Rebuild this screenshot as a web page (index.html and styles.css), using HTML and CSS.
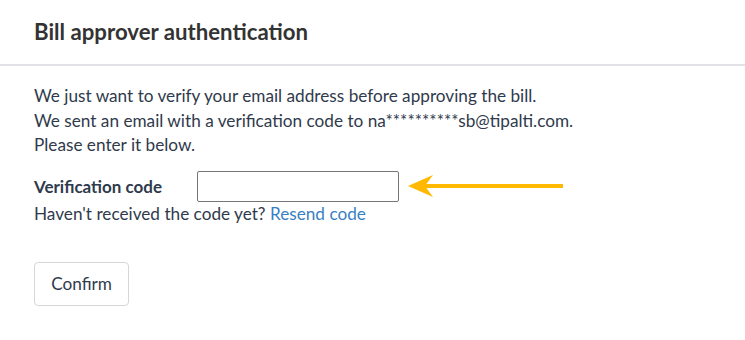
FILE: index.html
```html
<!DOCTYPE html>
<html lang="en">
<head>
<meta charset="utf-8">
<title>Bill approver authentication</title>
<link rel="stylesheet" href="styles.css">
</head>
<body>
  <header class="header">
    <h1 class="title">Bill approver authentication</h1>
  </header>
  <main class="content">
    <p class="intro">We just want to verify your email address before approving the bill.<br>We sent an email with a verification code to na**********sb@tipalti.com.<br>Please enter it below.</p>
    <div class="code-row">
      <label class="code-label" for="code">Verification code</label>
      <input class="code-input" id="code" type="text">
      <svg class="arrow" width="156" height="24" viewBox="0 0 156 24" aria-hidden="true">
        <line x1="16" y1="12" x2="155" y2="12" stroke="#FFB900" stroke-width="4"/>
        <path d="M0 12 L25 1 L17 12 L25 23 Z" fill="#FFB900"/>
      </svg>
    </div>
    <p class="resend">Haven't received the code yet? <a class="resend-link" href="#">Resend code</a></p>
    <button class="confirm" type="button">Confirm</button>
  </main>
</body>
</html>
```
FILE: styles.css
```css
html, body {
  margin: 0;
  padding: 0;
  background: #ffffff;
}
body {
  font-family: Lato, "Open Sans", sans-serif;
  color: #2f3a4c;
  font-size: 17.2px;
}
.header {
  height: 64px;
  padding: 0 34px;
  border-bottom: 2px solid #e1e1e7;
  display: flex;
  align-items: center;
}
.title {
  margin: 0;
  font-size: 22.2px;
  line-height: 64px;
  font-weight: 700;
  color: #333333;
}
.content {
  padding: 18px 34px 0;
}
.intro {
  margin: 0;
  line-height: 24.5px;
}
.code-row {
  display: flex;
  align-items: center;
  margin-top: 13px;
}
.code-label {
  width: 163px;
  font-weight: 700;
  font-size: 17px;
  color: #2f3a4c;
}
.code-input {
  box-sizing: border-box;
  width: 202px;
  height: 31px;
  margin: 0;
  border: 1px solid #767676;
  border-radius: 2px;
  padding: 4px 8px;
  font: inherit;
  outline: none;
}
.arrow {
  margin-left: 9px;
  display: block;
}
.resend {
  margin: 0;
  line-height: 24px;
}
.resend-link {
  color: #3a7fc1;
  text-decoration: none;
}
.confirm {
  margin-top: 36px;
  box-sizing: border-box;
  width: 95px;
  height: 44px;
  background: #ffffff;
  border: 1px solid #d6d6d6;
  border-radius: 4px;
  font-family: inherit;
  font-size: 17.2px;
  color: #2f3a4c;
  padding: 0;
  cursor: pointer;
}
```
